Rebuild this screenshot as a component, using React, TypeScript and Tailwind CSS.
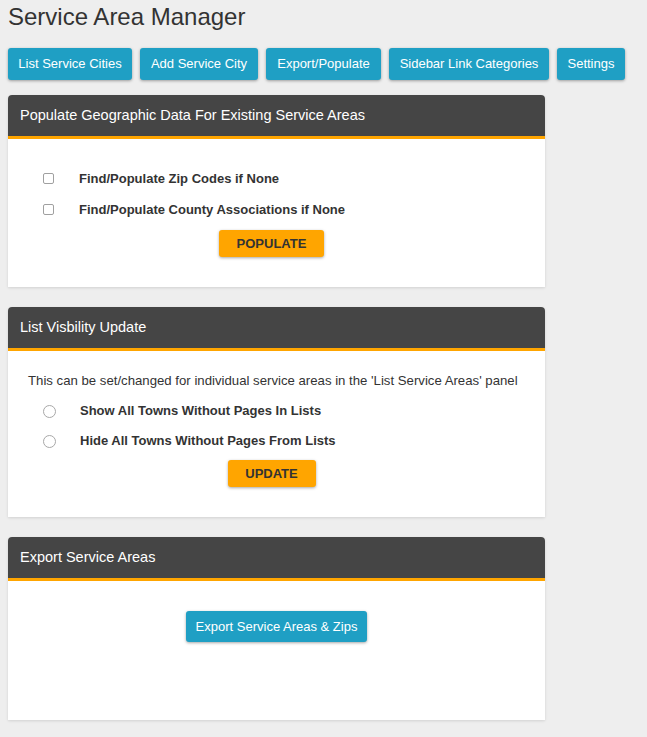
const navItems = [
  { label: 'List Service Cities', w: 'w-[124px]' },
  { label: 'Add Service City', w: 'w-[118px]' },
  { label: 'Export/Populate', w: 'w-[115px]' },
  { label: 'Sidebar Link Categories', w: 'w-[160px]' },
  { label: 'Settings', w: 'w-[68px]' },
];

function Panel({ title, children }: { title: string; children: React.ReactNode }) {
  return (
    <div className="w-[537px] rounded-t-[4px] bg-white shadow-[0_1px_3px_rgba(0,0,0,0.12)]">
      <div className="h-[44px] rounded-t-[4px] bg-[#454545] border-b-[3px] border-[#ffa500] flex items-center px-[12px] text-[14.5px] text-white">
        {title}
      </div>
      {children}
    </div>
  );
}

function CheckRow({ label }: { label: string }) {
  return (
    <div className="h-[31px] flex items-center">
      <span className="ml-[35px] w-[11px] h-[11px] rounded-[2px] border border-[#a0a0a0] bg-white" />
      <span className="ml-[25px] text-[13px] font-bold text-[#333]">{label}</span>
    </div>
  );
}

function RadioRow({ label }: { label: string }) {
  return (
    <div className="h-[30px] flex items-center">
      <span className="ml-[35px] w-[13px] h-[13px] rounded-full border border-[#a8a8a8] bg-white" />
      <span className="ml-[24px] text-[13px] font-bold text-[#333]">{label}</span>
    </div>
  );
}

function OrangeButton({ label, w }: { label: string; w: string }) {
  return (
    <div className="flex justify-center pr-[10px]">
      <button className={`${w} h-[27px] rounded-[3px] bg-[#ffa500] text-[13px] font-bold text-[#333] shadow-[0_1px_3px_rgba(0,0,0,0.35)]`}>
        {label}
      </button>
    </div>
  );
}

export default function App() {
  return (
    <div className="min-h-screen bg-[#eeeeee] px-[8px] pb-[20px] text-[#333]" style={{ fontFamily: '"Liberation Sans", Arial, sans-serif' }}>
      <h1 className="pt-[3px] text-[24px] leading-[28px] text-[#333]">Service Area Manager</h1>

      <div className="mt-[17px] flex gap-[8px]">
        {navItems.map((item) => (
          <button
            key={item.label}
            className={`${item.w} h-[32px] rounded-[3px] bg-[#1f9fc4] text-[13px] text-white shadow-[0_1px_3px_rgba(0,0,0,0.35)]`}
          >
            {item.label}
          </button>
        ))}
      </div>

      <div className="mt-[15px] flex flex-col gap-[20px]">
        <Panel title="Populate Geographic Data For Existing Service Areas">
          <div className="pt-[24px] pb-[30px]">
            <CheckRow label="Find/Populate Zip Codes if None" />
            <CheckRow label="Find/Populate County Associations if None" />
            <div className="mt-[5px]">
              <OrangeButton label="POPULATE" w="w-[105px]" />
            </div>
          </div>
        </Panel>

        <Panel title="List Visbility Update">
          <div className="pt-[20px] pb-[30px]">
            <div className="h-[20px] flex items-center pl-[20px] text-[13.2px] text-[#333]">
              This can be set/changed for individual service areas in the 'List Service Areas' panel
            </div>
            <div className="mt-[5px]">
              <RadioRow label="Show All Towns Without Pages In Lists" />
              <RadioRow label="Hide All Towns Without Pages From Lists" />
            </div>
            <div className="mt-[4px]">
              <OrangeButton label="UPDATE" w="w-[88px]" />
            </div>
          </div>
        </Panel>

        <Panel title="Export Service Areas">
          <div className="pt-[30px] pb-[78px] flex justify-center">
            <button className="h-[31px] w-[181px] rounded-[3px] bg-[#1f9fc4] text-[13px] text-white shadow-[0_1px_3px_rgba(0,0,0,0.35)]">
              Export Service Areas &amp; Zips
            </button>
          </div>
        </Panel>
      </div>
    </div>
  );
}
